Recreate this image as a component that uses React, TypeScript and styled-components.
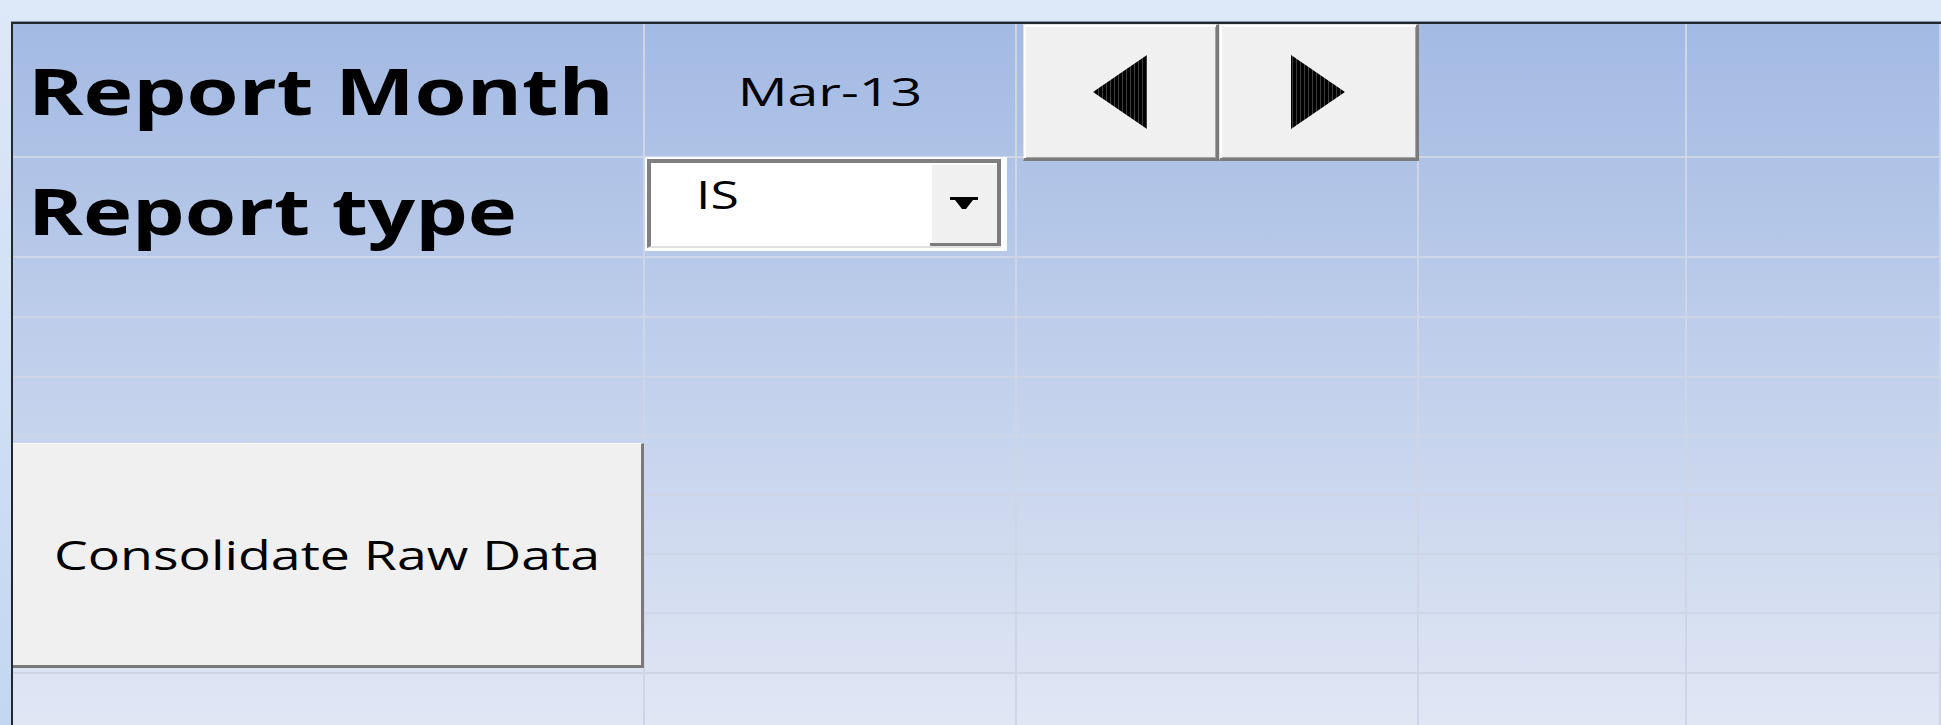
import React from "react";
import styled, { createGlobalStyle } from "styled-components";

const GlobalStyle = createGlobalStyle`
  html, body {
    margin: 0;
    padding: 0;
  }
  body {
    width: 1941px;
    height: 725px;
    overflow: hidden;
    background: #dce7f7;
    font-family: "Open Sans", "Noto Sans", sans-serif;
    color: #000;
  }
`;

const Window = styled.div`
  width: 1941px;
  height: 725px;
  box-sizing: border-box;
  overflow: hidden;
  padding: 22px 0 0 11px;
  display: flex;
  background: linear-gradient(to bottom, #dde8f8 0%, #c3d7f1 100%);
`;

const Frame = styled.div`
  flex: 1;
  border-top: 2px solid #23272e;
  border-left: 2px solid #23272e;
  box-shadow: 0 -1px 0 #8794ad;
  background: linear-gradient(to bottom, #a3bae3 0px, #e0e6f4 700px);
  overflow: hidden;
`;

const Sheet = styled.div`
  display: grid;
  grid-template-columns: 632px 372px 402px 268px 1fr;
  grid-template-rows: 134px 100px 60px 60px 59px 59px 59px 59px 60px 60px;
`;

const Cell = styled.div<{ $r: number; $c: number }>`
  grid-row: ${(p) => p.$r};
  grid-column: ${(p) => p.$c};
  box-sizing: border-box;
  border-right: 2px solid #cdd5e6;
  border-bottom: 2px solid #cdd5e6;
`;

const HeadingCell = styled(Cell)<{ $shift?: number }>`
  display: flex;
  align-items: center;
  padding: ${(p) => p.$shift ?? 0}px 0 0 15px;
  font-size: 64px;
  font-weight: 750;
  line-height: normal;
`;

const ValueCell = styled(Cell)`
  display: flex;
  align-items: center;
  justify-content: center;
  font-size: 39px;
  font-weight: 500;
  line-height: normal;
`;

const Wide = styled.span<{ $sx: number; $origin?: string }>`
  display: inline-block;
  white-space: nowrap;
  transform: scaleX(${(p) => p.$sx});
  transform-origin: ${(p) => p.$origin ?? "left center"};
`;

/* month stepper: two bevelled buttons with arrow glyphs */
const SpinPair = styled.div`
  grid-row: 1;
  grid-column: 3;
  z-index: 2;
  align-self: start;
  margin-left: 6px;
  height: 137px;
  display: flex;
`;

const SpinButton = styled.button<{ $w: number }>`
  width: ${(p) => p.$w}px;
  height: 100%;
  margin: 0;
  padding: 0;
  box-sizing: border-box;
  background: #f0f0f0;
  border-style: solid;
  border-width: 1px 3px 3px 1px;
  border-color: #e2e2e2 #7b7b7b #7b7b7b #e2e2e2;
  box-shadow: inset 2px 2px 0 #fff, inset -1px -1px 0 #a5a5a5;
  display: flex;
  align-items: center;
  justify-content: center;
  cursor: pointer;
`;

/* report type combo box */
const ComboFrame = styled.div`
  grid-row: 2;
  grid-column: 2;
  z-index: 2;
  align-self: start;
  margin-top: -1px;
  width: 362px;
  height: 94px;
  box-sizing: border-box;
  padding: 2px 6px 3px 2px;
  background: #fbfcfe;
`;

const ComboField = styled.div`
  height: 100%;
  box-sizing: border-box;
  display: flex;
  background: #fff;
  border-top: 4px solid #808080;
  border-left: 4px solid #808080;
  border-bottom: 2px solid #e1e1e1;
`;

const ComboValue = styled.div`
  flex: 1;
  padding: 5px 0 0 45px;
  font-size: 38px;
  font-weight: 500;
  line-height: normal;
`;

const ComboButton = styled.div`
  width: 71px;
  box-sizing: border-box;
  background: #f0f0f0;
  border-right: 4px solid #7c7c7c;
  border-bottom: 3px solid #7c7c7c;
  box-shadow: inset 2px 2px 0 #fff;
  display: flex;
  align-items: center;
  justify-content: center;
`;

const ActionButton = styled.button`
  grid-row: 6 / 10;
  grid-column: 1;
  z-index: 2;
  align-self: start;
  margin: 6px 1px 0 0;
  height: 225px;
  padding: 0;
  box-sizing: border-box;
  background: #f0f0f0;
  border: 0;
  border-top: 1px solid #fafafa;
  border-right: 3px solid #7a7a7a;
  border-bottom: 3px solid #7a7a7a;
  font-family: "Open Sans", "Noto Sans", sans-serif;
  font-size: 40.5px;
  font-weight: 500;
  line-height: normal;
  color: #000;
  display: flex;
  align-items: center;
  justify-content: center;
  cursor: pointer;
`;

const Arrow = ({ dir }: { dir: "left" | "right" }) => (
  <svg width="54" height="74" viewBox="0 0 54 74">
    <defs>
      <pattern id={`hatch-${dir}`} width="4" height="74" patternUnits="userSpaceOnUse">
        <rect width="4" height="74" fill="#000" />
        <rect x="1" width="1" height="74" fill="#3c3c3c" />
      </pattern>
    </defs>
    <polygon
      points={dir === "left" ? "54,0 0,37 54,74" : "0,0 54,37 0,74"}
      fill={`url(#hatch-${dir})`}
    />
  </svg>
);

const DropArrow = () => (
  <svg width="28" height="12" viewBox="0 0 28 12">
    <path d="M0 0H28V3H23L16 12H12L5 3H0Z" fill="#000" />
  </svg>
);

const ROWS = 10;
const COLS = 5;

export default function App() {
  const grid: React.ReactNode[] = [];
  for (let r = 1; r <= ROWS; r++) {
    for (let c = 1; c <= COLS; c++) {
      if ((r === 1 && (c === 1 || c === 2)) || (r === 2 && c === 1)) continue;
      grid.push(<Cell key={`${r}-${c}`} $r={r} $c={c} />);
    }
  }

  return (
    <>
      <GlobalStyle />
      <Window>
        <Frame>
          <Sheet>
            {grid}
            <HeadingCell $r={1} $c={1}>
              <Wide $sx={1.315}>Report Month</Wide>
            </HeadingCell>
            <ValueCell $r={1} $c={2}>
              <Wide $sx={1.42} $origin="center">Mar-13</Wide>
            </ValueCell>
            <HeadingCell $r={2} $c={1} $shift={6}>
              <Wide $sx={1.3}>Report type</Wide>
            </HeadingCell>

            <SpinPair>
              <SpinButton $w={196} aria-label="Previous month">
                <Arrow dir="left" />
              </SpinButton>
              <SpinButton $w={200} aria-label="Next month">
                <Arrow dir="right" />
              </SpinButton>
            </SpinPair>

            <ComboFrame>
              <ComboField>
                <ComboValue>
                  <Wide $sx={1.36}>IS</Wide>
                </ComboValue>
                <ComboButton>
                  <DropArrow />
                </ComboButton>
              </ComboField>
            </ComboFrame>

            <ActionButton>
              <Wide $sx={1.325} $origin="center">Consolidate Raw Data</Wide>
            </ActionButton>
          </Sheet>
        </Frame>
      </Window>
    </>
  );
}
